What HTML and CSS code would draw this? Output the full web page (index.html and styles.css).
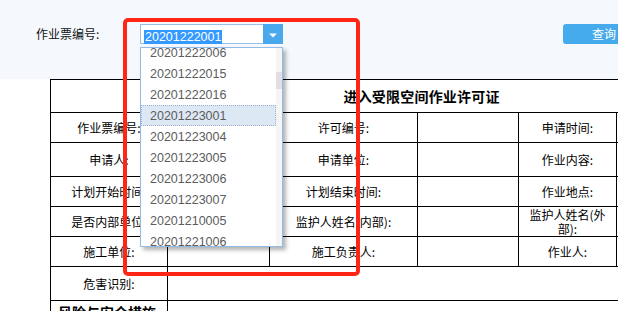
FILE: index.html
```html
<!DOCTYPE html>
<html lang="zh-CN">
<head>
<meta charset="utf-8">
<title>进入受限空间作业许可证</title>
<link rel="stylesheet" href="styles.css">
</head>
<body>
<div class="toolbar">
  <span class="field-label">作业票编号:</span>
  <div class="combo">
    <div class="combo-input"><span class="sel">20201222001</span></div>
    <div class="combo-btn"><svg width="8" height="5" viewBox="0 0 8 5"><path d="M0 0.5h8L4 4.5z" fill="#fff"/></svg></div>
    <div class="dropdown">
      <ul class="options">
        <li>20201222006</li>
        <li>20201222015</li>
        <li>20201222016</li>
        <li class="active">20201223001</li>
        <li>20201223004</li>
        <li>20201223005</li>
        <li>20201223006</li>
        <li>20201223007</li>
        <li>20201210005</li>
        <li>20201221006</li>
      </ul>
      <div class="scrollbar"><div class="thumb"></div></div>
    </div>
  </div>
  <button class="query">查询</button>
</div>
<table class="permit">
  <colgroup>
    <col class="c1"><col class="c2"><col class="c3"><col class="c4"><col class="c5"><col class="c6">
  </colgroup>
  <tr class="r-title"><td colspan="6" class="title">进入受限空间作业许可证</td></tr>
  <tr class="r30"><td>作业票编号:</td><td></td><td>许可编号:</td><td></td><td>申请时间:</td><td></td></tr>
  <tr class="r34"><td>申请人:</td><td></td><td>申请单位:</td><td></td><td>作业内容:</td><td></td></tr>
  <tr class="r30"><td>计划开始时间:</td><td></td><td>计划结束时间:</td><td></td><td>作业地点:</td><td></td></tr>
  <tr class="r30"><td>是否内部单位:</td><td></td><td>监护人姓名(内部):</td><td></td><td class="wrap">监护人姓名(外<br>部):</td><td></td></tr>
  <tr class="r30"><td>施工单位:</td><td></td><td>施工负责人:</td><td></td><td>作业人:</td><td></td></tr>
  <tr class="r34"><td>危害识别:</td><td colspan="5"></td></tr>
  <tr class="r-last"><td class="bold-label">风险与安全措施</td><td colspan="5"></td></tr>
</table>
<div class="annotation"></div>
</body>
</html>
```
FILE: styles.css
```css
html, body {
  margin: 0;
  padding: 0;
  overflow: hidden;
  background: #fff;
}
body {
  font-family: "Noto Sans CJK SC", "Liberation Sans", sans-serif;
  font-size: 12px;
  color: #000;
  position: relative;
  width: 618px;
  height: 311px;
}
.toolbar {
  height: 79px;
  box-sizing: border-box;
  background: #f5f9fe;
  padding: 24px 0 0 36px;
  display: flex;
  align-items: flex-start;
}
.toolbar > * { flex-shrink: 0; }
.field-label {
  width: 104px;
  height: 20px;
  line-height: 20px;
  font-size: 12px;
  color: #111;
}
.combo {
  position: relative;
  width: 143px;
  height: 20px;
  display: flex;
}
.combo-input {
  flex: 1;
  box-sizing: border-box;
  height: 20px;
  border: 1px solid #99bfe6;
  border-right: none;
  background: #fff;
  padding: 2px 0 0 3px;
}
.sel {
  display: inline-block;
  height: 14px;
  line-height: 15px;
  padding: 0 1px;
  background: #3399ff;
  color: #fff;
  font-family: "Liberation Sans", Arial, sans-serif;
  font-size: 12.5px;
}
.combo-btn {
  width: 20px;
  height: 20px;
  background: #4aa8ec;
  display: flex;
  align-items: center;
  justify-content: center;
  padding-top: 3px;
  box-sizing: border-box;
}
.combo-btn svg { display: block; }
.dropdown {
  position: absolute;
  left: 0;
  top: 23px;
  width: 143px;
  height: 200px;
  box-sizing: border-box;
  border: 1px solid #93bbe8;
  background: #fff;
  box-shadow: 3px 3px 4px rgba(0, 0, 0, 0.3);
  display: flex;
  overflow: hidden;
  z-index: 5;
}
.options {
  list-style: none;
  margin: -6px 0 0 0;
  padding: 0;
  flex: 1;
}
.options li {
  height: 21px;
  line-height: 17px;
  padding-top: 2px;
  box-sizing: border-box;
  padding-left: 8px;
  font-family: "Liberation Sans", Arial, sans-serif;
  font-size: 12.5px;
  color: #5c5c5c;
  border: 1px solid transparent;
  overflow: visible;
}
.options li.active {
  background: #dde8f5;
  border: 1px dotted #9fb2d6;
}
.scrollbar {
  width: 6px;
  flex-shrink: 0;
  background: #f5f5f5;
  position: relative;
}
.thumb {
  position: absolute;
  left: 0;
  top: 24px;
  width: 6px;
  height: 17px;
  background: #e1dfe4;
}
.query {
  margin-left: 280px;
  width: 80px;
  height: 20px;
  border: none;
  border-radius: 3px;
  background: #46abec;
  color: #fff;
  font-family: "Noto Sans CJK SC", sans-serif;
  font-size: 12px;
  padding: 0;
  text-align: left;
  text-indent: 29px;
  line-height: 20px;
}
.permit {
  margin-left: 50px;
  width: 742px;
  border-collapse: collapse;
  table-layout: fixed;
}
.permit col.c1 { width: 117px; }
.permit col.c2 { width: 102px; }
.permit col.c3 { width: 148px; }
.permit col.c4 { width: 101px; }
.permit col.c5 { width: 98px; }
.permit col.c6 { width: 176px; }
.permit td {
  border: 1px solid #000;
  padding: 0 6px;
  text-align: center;
  vertical-align: middle;
  line-height: 14px;
  font-size: 12px;
  overflow: hidden;
}
.permit tr.r-title td { height: 32px; }
.permit tr.r30 td { height: 29px; }
.permit tr.r34 td { height: 33px; }
.permit tr.r-last td { height: 40px; vertical-align: top; }
.permit td.title {
  font-weight: bold;
  font-size: 14px;
  letter-spacing: 0.2px;
}
.permit td.bold-label {
  text-align: left;
  font-weight: bold;
  font-size: 14px;
  padding: 2px 0 0 7px;
  line-height: 18px;
}
.annotation {
  position: absolute;
  left: 123px;
  top: 18px;
  width: 237px;
  height: 258px;
  box-sizing: border-box;
  border: 4px solid #ff2616;
  border-radius: 5px;
  z-index: 10;
  pointer-events: none;
}
```
